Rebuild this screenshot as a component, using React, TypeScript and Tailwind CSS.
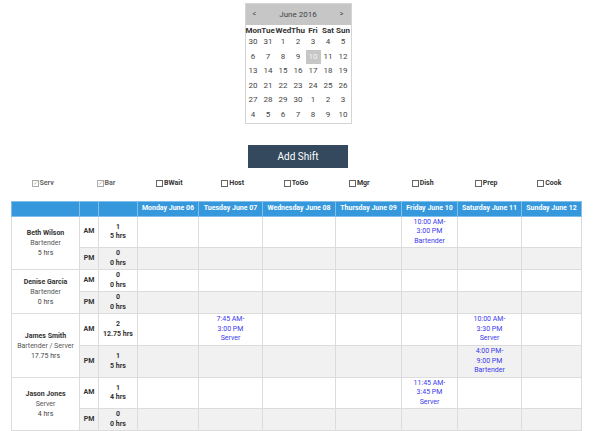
import React from "react";

const weeks = [
  [30, 31, 1, 2, 3, 4, 5],
  [6, 7, 8, 9, 10, 11, 12],
  [13, 14, 15, 16, 17, 18, 19],
  [20, 21, 22, 23, 24, 25, 26],
  [27, 28, 29, 30, 1, 2, 3],
  [4, 5, 6, 7, 8, 9, 10],
];

const roles = [
  { name: "Serv", on: true },
  { name: "Bar", on: true },
  { name: "BWait", on: false },
  { name: "Host", on: false },
  { name: "ToGo", on: false },
  { name: "Mgr", on: false },
  { name: "Dish", on: false },
  { name: "Prep", on: false },
  { name: "Cook", on: false },
];

const days = [
  "Monday June 06",
  "Tuesday June 07",
  "Wednesday June 08",
  "Thursday June 09",
  "Friday June 10",
  "Saturday June 11",
  "Sunday June 12",
];

const colWidths = [68, 19, 39, 61, 64, 73, 66, 56, 64, 60];

type Shift = { day: number; lines: string[] };
type Half = { count: number; hrs: string; h: string; shifts: Shift[] };
type Emp = { name: string; role: string; total: string; am: Half; pm: Half };

const employees: Emp[] = [
  {
    name: "Beth Wilson",
    role: "Bartender",
    total: "5 hrs",
    am: { count: 1, hrs: "5 hrs", h: "h-[31px]", shifts: [{ day: 4, lines: ["10:00 AM-", "3:00 PM", "Bartender"] }] },
    pm: { count: 0, hrs: "0 hrs", h: "h-[22px]", shifts: [] },
  },
  {
    name: "Denise Garcia",
    role: "Bartender",
    total: "0 hrs",
    am: { count: 0, hrs: "0 hrs", h: "h-[22px]", shifts: [] },
    pm: { count: 0, hrs: "0 hrs", h: "h-[22px]", shifts: [] },
  },
  {
    name: "James Smith",
    role: "Bartender / Server",
    total: "17.75 hrs",
    am: {
      count: 2,
      hrs: "12.75 hrs",
      h: "h-[32px]",
      shifts: [
        { day: 1, lines: ["7:45 AM-", "3:00 PM", "Server"] },
        { day: 5, lines: ["10:00 AM-", "3:30 PM", "Server"] },
      ],
    },
    pm: { count: 1, hrs: "5 hrs", h: "h-[32px]", shifts: [{ day: 5, lines: ["4:00 PM-", "9:00 PM", "Bartender"] }] },
  },
  {
    name: "Jason Jones",
    role: "Server",
    total: "4 hrs",
    am: { count: 1, hrs: "4 hrs", h: "h-[31px]", shifts: [{ day: 4, lines: ["11:45 AM-", "3:45 PM", "Server"] }] },
    pm: { count: 0, hrs: "0 hrs", h: "h-[22px]", shifts: [] },
  },
];

function Checkbox({ on }: { on: boolean }) {
  return (
    <span
      className={`inline-flex w-[7px] h-[7px] items-center justify-center border mr-px bg-white ${
        on ? "border-[#aaa]" : "border-[#666]"
      }`}
    >
      {on && (
        <svg viewBox="0 0 8 8" className="w-[6px] h-[6px]">
          <path d="M1 4.2 L3 6 L7 1.5" fill="none" stroke="#999" strokeWidth="0.9" />
        </svg>
      )}
    </span>
  );
}

function HalfRow({ emp, half, pm }: { emp: Emp; half: Half; pm: boolean }) {
  const cell = "border border-[#dcdcdc] text-center align-middle px-0 py-0";
  return (
    <tr className={`${half.h} ${pm ? "bg-[#f1f1f1]" : "bg-white"}`}>
      {!pm && (
        <td rowSpan={2} className={`${cell} bg-white text-[#444] leading-[10px]`}>
          <div className="font-bold text-[#333]">{emp.name}</div>
          <div className="text-[#555]">{emp.role}</div>
          <div>{emp.total}</div>
        </td>
      )}
      <td className={`${cell} font-bold text-[#333]`}>{pm ? "PM" : "AM"}</td>
      <td className={`${cell} font-bold text-[#333]`}>
        <div>{half.count}</div>
        <div>{half.hrs}</div>
      </td>
      {days.map((d, i) => {
        const s = half.shifts.find((x) => x.day === i);
        return (
          <td key={d} className={`${cell} text-[#3a3aee]`}>
            {s && s.lines.map((l) => <div key={l}>{l}</div>)}
          </td>
        );
      })}
    </tr>
  );
}

export default function App() {
  return (
    <div className="w-[596px] h-[431px] bg-white overflow-hidden text-[#333]" style={{ fontFamily: "Roboto, 'Liberation Sans', sans-serif" }}>
      {/* Calendar */}
      <div className="flex justify-center pt-[3px]">
        <div className="w-[107px] border border-[#d4d4d4] bg-white pb-px">
          <div className="h-[21px] bg-[#c6c6c6] flex items-center justify-between px-[7px] text-[8px] text-[#444]">
            <span className="text-[7px]">&lt;</span>
            <span>June 2016</span>
            <span className="text-[7px]">&gt;</span>
          </div>
          <div className="grid grid-cols-7 h-[9px] items-center text-[8px] font-bold text-[#333] leading-none mt-px">
            {["Mon", "Tue", "Wed", "Thu", "Fri", "Sat", "Sun"].map((d) => (
              <span key={d} className="text-center">{d}</span>
            ))}
          </div>
          {weeks.map((w, wi) => (
            <div key={wi} className="grid grid-cols-7 h-[14.5px] text-[8px] text-[#444]">
              {w.map((n, di) => (
                <span
                  key={di}
                  className={`flex items-center justify-center ${
                    wi === 1 && n === 10 ? "bg-[#c6c6c6] text-[#f4f4f4]" : ""
                  }`}
                >
                  {n}
                </span>
              ))}
            </div>
          ))}
        </div>
      </div>

      {/* Add Shift */}
      <div className="flex justify-center mt-[21px]">
        <button className="w-[100px] h-[23px] bg-[#34495e] text-white text-[10px] flex items-center justify-center">
          Add Shift
        </button>
      </div>

      {/* Role filters */}
      <div className="ml-[11px] w-[570px] grid grid-cols-9 mt-[11px] h-[8px]">
        {roles.map((r) => (
          <div key={r.name} className="flex items-center justify-center text-[7px] font-bold text-[#333] leading-none">
            <Checkbox on={r.on} />
            <span className={r.on ? "text-[#666]" : ""}>{r.name}</span>
          </div>
        ))}
      </div>

      {/* Schedule */}
      <table className="ml-[11px] mt-[14px] w-[570px] table-fixed border-collapse text-[7px] leading-[9.5px]">
        <colgroup>
          {colWidths.map((w, i) => (
            <col key={i} style={{ width: w }} />
          ))}
        </colgroup>
        <thead>
          <tr className="h-[15px] bg-[#3598dc] text-white font-bold">
            <th className="border border-[#7fbfe9]"></th>
            <th className="border border-[#7fbfe9]"></th>
            <th className="border border-[#7fbfe9]"></th>
            {days.map((d) => (
              <th key={d} className="border border-[#7fbfe9] font-bold text-center whitespace-nowrap">
                {d}
              </th>
            ))}
          </tr>
        </thead>
        <tbody>
          {employees.map((e) => (
            <React.Fragment key={e.name}>
              <HalfRow emp={e} half={e.am} pm={false} />
              <HalfRow emp={e} half={e.pm} pm={true} />
            </React.Fragment>
          ))}
        </tbody>
      </table>
    </div>
  );
}
